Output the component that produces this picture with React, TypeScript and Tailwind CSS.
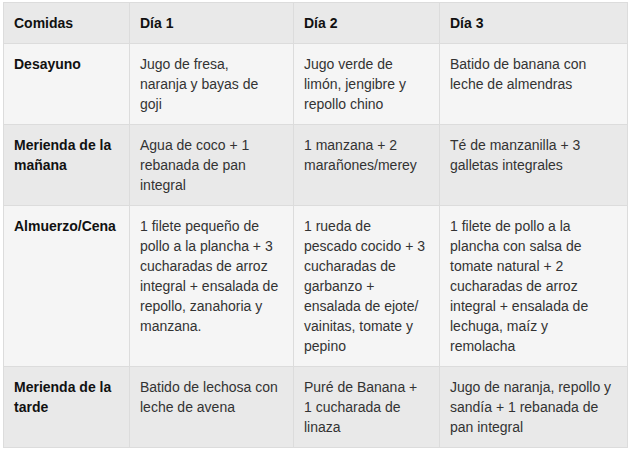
const rows: { label: string[]; cells: string[][] }[] = [
  {
    label: ["Desayuno"],
    cells: [
      ["Jugo de fresa,", "naranja y bayas de", "goji"],
      ["Jugo verde de", "limón, jengibre y", "repollo chino"],
      ["Batido de banana con", "leche de almendras"],
    ],
  },
  {
    label: ["Merienda de la", "mañana"],
    cells: [
      ["Agua de coco + 1", "rebanada de pan", "integral"],
      ["1 manzana + 2", "marañones/merey"],
      ["Té de manzanilla + 3", "galletas integrales"],
    ],
  },
  {
    label: ["Almuerzo/Cena"],
    cells: [
      [
        "1 filete pequeño de",
        "pollo a la plancha + 3",
        "cucharadas de arroz",
        "integral + ensalada de",
        "repollo, zanahoria y",
        "manzana.",
      ],
      [
        "1 rueda de",
        "pescado cocido + 3",
        "cucharadas de",
        "garbanzo +",
        "ensalada de ejote/",
        "vainitas, tomate y",
        "pepino",
      ],
      [
        "1 filete de pollo a la",
        "plancha con salsa de",
        "tomate natural + 2",
        "cucharadas de arroz",
        "integral + ensalada de",
        "lechuga, maíz y",
        "remolacha",
      ],
    ],
  },
  {
    label: ["Merienda de la", "tarde"],
    cells: [
      ["Batido de lechosa con", "leche de avena"],
      ["Puré de Banana +", "1 cucharada de", "linaza"],
      ["Jugo de naranja, repollo y", "sandía + 1 rebanada de", "pan integral"],
    ],
  },
];

function Lines({ lines }: { lines: string[] }) {
  return (
    <>
      {lines.map((l, k) => (
        <div key={k} className="whitespace-nowrap">
          {l}
        </div>
      ))}
    </>
  );
}

export default function App() {
  return (
    <div className="min-h-screen bg-white pt-[2px] pl-[3px] font-['Liberation_Sans',Arial,sans-serif] text-[14px] leading-[20px]">
      <table className="table-fixed border-collapse w-[624px] text-left">
        <colgroup>
          <col className="w-[126px]" />
          <col className="w-[164px]" />
          <col className="w-[146px]" />
          <col className="w-[188px]" />
        </colgroup>
        <thead>
          <tr className="bg-[#e9e9e9]">
            {["Comidas", "Día 1", "Día 2", "Día 3"].map((h) => (
              <th
                key={h}
                className="border border-[#dcdcdc] px-[10px] py-[10px] font-bold text-[#111] align-top"
              >
                {h}
              </th>
            ))}
          </tr>
        </thead>
        <tbody>
          {rows.map((r, i) => (
            <tr key={i} className={i % 2 === 0 ? "bg-[#f5f5f5]" : "bg-[#e9e9e9]"}>
              <td className="border border-[#dcdcdc] px-[10px] py-[10px] font-bold text-[#111] align-top">
                <Lines lines={r.label} />
              </td>
              {r.cells.map((c, j) => (
                <td
                  key={j}
                  className="border border-[#dcdcdc] px-[10px] py-[10px] text-[#333] align-top"
                >
                  <Lines lines={c} />
                </td>
              ))}
            </tr>
          ))}
        </tbody>
      </table>
    </div>
  );
}
